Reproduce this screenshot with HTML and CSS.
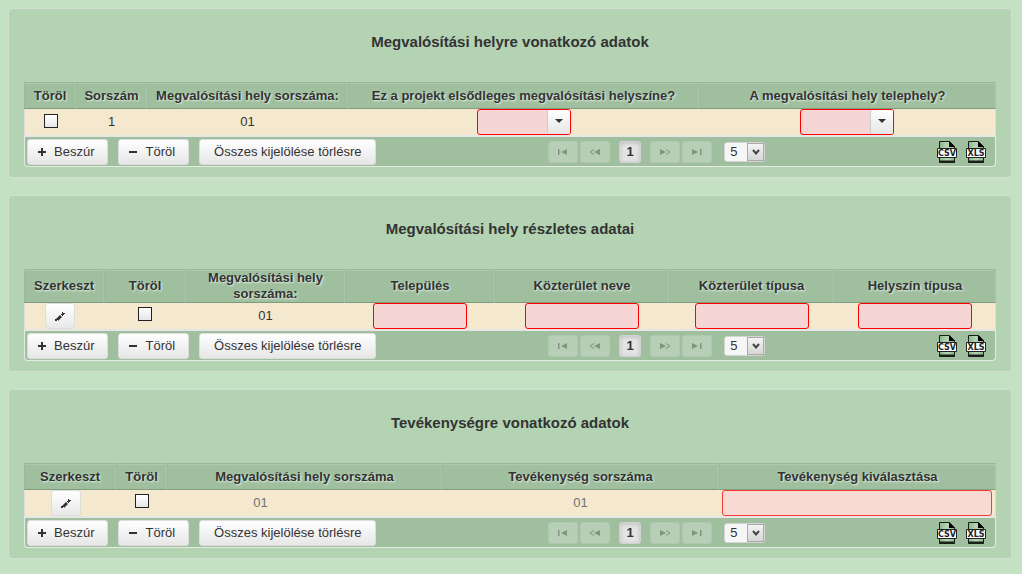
FILE: index.html
```html
<!DOCTYPE html>
<html lang="hu">
<head>
<meta charset="utf-8">
<title>Megvalósítási helyszín</title>
<link rel="stylesheet" href="styles.css">
</head>
<body>
<svg class="sprite" aria-hidden="true">
  <symbol id="plus" viewBox="0 0 8 8"><path d="M3 0h2v3h3v2H5v3H3V5H0V3h3z"/></symbol>
  <symbol id="minus" viewBox="0 0 8 8"><path d="M0 3h8v2H0z"/></symbol>
  <symbol id="caret" viewBox="0 0 8 4"><path d="M0 0h8L4 4z"/></symbol>
  <symbol id="pencil" viewBox="0 0 10 10"><path d="M0 10V8h2v2zM1 8l4-4 2 2-4 4V9H2V8zM6 3h1V1h1v1h2v1H9v1H8v1H7V4H6z"/></symbol>
  <symbol id="first" viewBox="0 0 10 6"><path d="M0 0h1.500v6H0zM9 0v6L3 3z"/></symbol>
  <symbol id="prev" viewBox="0 0 12 6"><path d="M11 0v6L5 3z"/><path d="M5 .5L1 3l4 2.500" fill="none" stroke="currentColor"/></symbol>
  <symbol id="next" viewBox="0 0 12 6"><path d="M1 0v6l6-3z"/><path d="M7 .5L11 3 7 5.500" fill="none" stroke="currentColor"/></symbol>
  <symbol id="last" viewBox="0 0 10 6"><path d="M8 0h1.500v6H8zM0 0v6l6-3z"/></symbol>
  <symbol id="chevron" viewBox="0 0 8 6"><path d="M1 1l3 3.500L7 1" fill="none" stroke="currentColor" stroke-width="2"/></symbol>
  <symbol id="sheet" viewBox="0 0 20 22">
    <path d="M2.500.5h10l5 5v16h-15z" fill="url(#paper)" stroke="#182018"/>
    <path d="M12 0l6 6h-6z" fill="#000"/>
    <path d="M2 20.500h16" stroke="#182018" stroke-width="2"/>
    <path d="M.5 7.500h19v9H.5z" fill="#fff" stroke="#222"/>
  </symbol>
  <linearGradient id="paper"><stop offset="0" stop-color="#8fb490"/><stop offset=".5" stop-color="#b5d6b4"/><stop offset="1" stop-color="#8fb490"/></linearGradient>
</svg>
<main class="page">

<section class="panel">
  <h2 class="title">Megvalósítási helyre vonatkozó adatok</h2>
  <table class="grid">
    <colgroup><col class="w52"><col class="w71"><col class="w201"><col class="w351"><col class="w297"></colgroup>
    <thead><tr><th>Töröl</th><th>Sorszám</th><th>Megvalósítási hely sorszáma:</th><th>Ez a projekt elsődleges megvalósítási helyszíne?</th><th>A megvalósítási hely telephely?</th></tr></thead>
    <tbody><tr>
      <td><input class="tick" type="checkbox" aria-label="Töröl"></td>
      <td>1</td><td>01</td>
      <td><span class="combo"><select class="combo-field" aria-label="Ez a projekt elsődleges megvalósítási helyszíne?"><option></option></select><span class="combo-arrow"><svg width="8" height="4"><use href="#caret"/></svg></span></span></td>
      <td><span class="combo"><select class="combo-field" aria-label="A megvalósítási hely telephely?"><option></option></select><span class="combo-arrow"><svg width="8" height="4"><use href="#caret"/></svg></span></span></td>
    </tr></tbody>
  </table>
  <div class="toolbar">
    <div class="actions">
      <button class="btn with-icon" type="button"><svg width="8" height="8"><use href="#plus"/></svg>Beszúr</button>
      <button class="btn with-icon" type="button"><svg width="8" height="8"><use href="#minus"/></svg>Töröl</button>
      <button class="btn" type="button">Összes kijelölése törlésre</button>
    </div>
    <nav class="pager" aria-label="Lapozó">
      <button class="step" type="button" disabled aria-label="Első"><svg width="10" height="6"><use href="#first"/></svg></button>
      <button class="step" type="button" disabled aria-label="Előző"><svg width="12" height="6"><use href="#prev"/></svg></button>
      <button class="current" type="button">1</button>
      <button class="step" type="button" disabled aria-label="Következő"><svg width="12" height="6"><use href="#next"/></svg></button>
      <button class="step" type="button" disabled aria-label="Utolsó"><svg width="10" height="6"><use href="#last"/></svg></button>
      <span class="rows"><select class="rows-field" aria-label="Sorok száma"><option>5</option></select><span class="rows-arrow"><svg width="8" height="6"><use href="#chevron"/></svg></span></span>
    </nav>
    <div class="exports">
      <a class="export" href="#csv"><svg width="20" height="22"><use href="#sheet"/><text x="10" y="15" class="ext">CSV</text></svg></a>
      <a class="export" href="#xls"><svg width="20" height="22"><use href="#sheet"/><text x="10" y="15" class="ext">XLS</text></svg></a>
    </div>
  </div>
</section>

<section class="panel">
  <h2 class="title">Megvalósítási hely részletes adatai</h2>
  <table class="grid">
    <colgroup><col class="w80"><col class="w82"><col class="w159"><col class="w150"><col class="w174"><col class="w165"><col class="w162"></colgroup>
    <thead><tr><th>Szerkeszt</th><th>Töröl</th><th>Megvalósítási hely sorszáma:</th><th>Település</th><th>Közterület neve</th><th>Közterület típusa</th><th>Helyszín típusa</th></tr></thead>
    <tbody><tr>
      <td class="edit-cell"><button class="edit" type="button" aria-label="Szerkeszt"><svg width="10" height="10"><use href="#pencil"/></svg></button></td>
      <td><input class="tick raised" type="checkbox" aria-label="Töröl"></td>
      <td>01</td>
      <td><input class="field short" type="text" aria-label="Település"></td>
      <td><input class="field" type="text" aria-label="Közterület neve"></td>
      <td><input class="field" type="text" aria-label="Közterület típusa"></td>
      <td><input class="field" type="text" aria-label="Helyszín típusa"></td>
    </tr></tbody>
  </table>
  <div class="toolbar">
    <div class="actions">
      <button class="btn with-icon" type="button"><svg width="8" height="8"><use href="#plus"/></svg>Beszúr</button>
      <button class="btn with-icon" type="button"><svg width="8" height="8"><use href="#minus"/></svg>Töröl</button>
      <button class="btn" type="button">Összes kijelölése törlésre</button>
    </div>
    <nav class="pager" aria-label="Lapozó">
      <button class="step" type="button" disabled aria-label="Első"><svg width="10" height="6"><use href="#first"/></svg></button>
      <button class="step" type="button" disabled aria-label="Előző"><svg width="12" height="6"><use href="#prev"/></svg></button>
      <button class="current" type="button">1</button>
      <button class="step" type="button" disabled aria-label="Következő"><svg width="12" height="6"><use href="#next"/></svg></button>
      <button class="step" type="button" disabled aria-label="Utolsó"><svg width="10" height="6"><use href="#last"/></svg></button>
      <span class="rows"><select class="rows-field" aria-label="Sorok száma"><option>5</option></select><span class="rows-arrow"><svg width="8" height="6"><use href="#chevron"/></svg></span></span>
    </nav>
    <div class="exports">
      <a class="export" href="#csv"><svg width="20" height="22"><use href="#sheet"/><text x="10" y="15" class="ext">CSV</text></svg></a>
      <a class="export" href="#xls"><svg width="20" height="22"><use href="#sheet"/><text x="10" y="15" class="ext">XLS</text></svg></a>
    </div>
  </div>
</section>

<section class="panel">
  <h2 class="title">Tevékenységre vonatkozó adatok</h2>
  <table class="grid">
    <colgroup><col class="w92"><col class="w51"><col class="w275"><col class="w277"><col class="w277"></colgroup>
    <thead><tr><th>Szerkeszt</th><th>Töröl</th><th>Megvalósítási hely sorszáma</th><th>Tevékenység sorszáma</th><th>Tevékenység kiválasztása</th></tr></thead>
    <tbody><tr>
      <td class="edit-cell"><button class="edit" type="button" aria-label="Szerkeszt"><svg width="10" height="10"><use href="#pencil"/></svg></button></td>
      <td><input class="tick raised" type="checkbox" aria-label="Töröl"></td>
      <td class="muted place">01</td>
      <td class="muted">01</td>
      <td class="wide-cell"><input class="field wide" type="text" aria-label="Tevékenység kiválasztása"></td>
    </tr></tbody>
  </table>
  <div class="toolbar">
    <div class="actions">
      <button class="btn with-icon" type="button"><svg width="8" height="8"><use href="#plus"/></svg>Beszúr</button>
      <button class="btn with-icon" type="button"><svg width="8" height="8"><use href="#minus"/></svg>Töröl</button>
      <button class="btn" type="button">Összes kijelölése törlésre</button>
    </div>
    <nav class="pager" aria-label="Lapozó">
      <button class="step" type="button" disabled aria-label="Első"><svg width="10" height="6"><use href="#first"/></svg></button>
      <button class="step" type="button" disabled aria-label="Előző"><svg width="12" height="6"><use href="#prev"/></svg></button>
      <button class="current" type="button">1</button>
      <button class="step" type="button" disabled aria-label="Következő"><svg width="12" height="6"><use href="#next"/></svg></button>
      <button class="step" type="button" disabled aria-label="Utolsó"><svg width="10" height="6"><use href="#last"/></svg></button>
      <span class="rows"><select class="rows-field" aria-label="Sorok száma"><option>5</option></select><span class="rows-arrow"><svg width="8" height="6"><use href="#chevron"/></svg></span></span>
    </nav>
    <div class="exports">
      <a class="export" href="#csv"><svg width="20" height="22"><use href="#sheet"/><text x="10" y="15" class="ext">CSV</text></svg></a>
      <a class="export" href="#xls"><svg width="20" height="22"><use href="#sheet"/><text x="10" y="15" class="ext">XLS</text></svg></a>
    </div>
  </div>
</section>

</main>
</body>
</html>
```
FILE: styles.css
```css
* { box-sizing: border-box; }
body {
  margin: 0;
  background: #c4e2c3;
  color: #333;
  font: 13px/16px "Liberation Sans", Arial, sans-serif;
}
button, input, select { font: inherit; color: inherit; margin: 0; }
svg { display: block; fill: currentColor; }
.sprite { position: absolute; width: 0; height: 0; }

.page {
  display: flex;
  flex-direction: column;
  gap: 17px;
  padding: 8px 10px 15px 8px;
}
.panel {
  padding: 23px 15px 10px;
  background: #b4d3b3;
  border: 1px solid #d3dfd3;
  border-radius: 4px;
}
.title {
  margin: 0 0 30px;
  font-size: 15px;
  line-height: 20px;
  text-align: center;
}

/* data table */
.grid {
  width: 100%;
  table-layout: fixed;
  border-collapse: separate;
  border-spacing: 0;
}
.w51 { width: 51px; } .w52 { width: 52px; } .w71 { width: 71px; }
.w80 { width: 80px; } .w82 { width: 82px; } .w92 { width: 92px; }
.w150 { width: 150px; } .w159 { width: 159px; } .w162 { width: 162px; }
.w165 { width: 165px; } .w174 { width: 174px; } .w201 { width: 201px; }
.w275 { width: 275px; } .w277 { width: 277px; } .w297 { width: 297px; }
.w351 { width: 351px; }
.grid th {
  height: 27px;
  padding: 0 4px;
  background: #a0bf9f;
  border: 1px solid #a9c7a8;
  border-top-color: #9ab999;
  border-bottom-color: #7f9c7f;
  border-left-color: #9cba9b;
  box-shadow: inset 0 1px #aecaad;
  text-shadow: 1px 1px 2px #e4f0e3;
}
.grid td {
  height: 26px;
  padding: 0;
  background: #f4e9ce;
  text-align: center;
  vertical-align: middle;
}
.grid td:first-child { border-left: 1px solid #dcdcdc; }
.grid td:last-child { border-right: 1px solid #dcdcdc; }
.grid .muted { color: #77706c; }
.grid .place { padding-right: 88px; }
.grid .edit-cell { padding-right: 10px; }
.grid .wide-cell { padding: 0 3px; }

.tick {
  appearance: none;
  display: block;
  width: 14px;
  height: 14px;
  margin: 0 auto 2px;
  border: 1px solid #222;
  background: linear-gradient(#fff, #e6e6e6);
}
.raised { margin-bottom: 4px; }

.field, .combo-field {
  display: block;
  width: 114px;
  height: 26px;
  margin: 0 auto;
  padding: 0 4px;
  border: 1px solid #f00;
  border-radius: 3px;
  background: #f6d6d5;
}
.short { width: 94px; }
.wide { width: 100%; background: #f6dad3; border-color: #fb3c36; }
.combo { position: relative; display: block; width: 94px; margin: 0 auto; }
.combo-field { width: 100%; appearance: none; }
.combo-arrow {
  position: absolute;
  top: 1px;
  right: 1px;
  bottom: 1px;
  display: grid;
  place-items: center;
  width: 23px;
  padding-bottom: 2px;
  border-left: 1px solid #ccc;
  border-radius: 2px;
  background: linear-gradient(#fff, #e6e6e6);
  pointer-events: none;
}
.edit {
  display: grid;
  place-items: center;
  width: 30px;
  height: 26px;
  margin: 0 auto;
  padding: 0;
  border: 1px solid #ddd;
  border-radius: 3px;
  background: linear-gradient(#fff, #e8e8e8);
}

/* table footer */
.toolbar {
  display: flex;
  align-items: center;
  justify-content: space-between;
  min-height: 32px;
  padding: 2px 9px 1px 2px;
  background: #a0bf9f;
  border: 1px solid #e4ebe3;
  border-top: 2px solid #e6e6e6;
  border-radius: 0 0 4px 4px;
}
.actions { display: flex; gap: 10px; }
.btn {
  display: flex;
  align-items: center;
  gap: 8px;
  height: 26px;
  padding: 0 14px;
  border: 1px solid #ddd;
  border-radius: 3px;
  background: linear-gradient(#fff, #e6e6e6);
  white-space: nowrap;
}
.with-icon { padding: 0 13px 0 10px; }
.pager { display: flex; align-items: center; gap: 2px; }
.step {
  display: grid;
  place-items: center;
  width: 30px;
  height: 22px;
  padding: 0;
  border: 1px solid #afc9ae;
  border-radius: 3px;
  background: #b8cfb7;
  color: #7d967d;
}
.current {
  width: 22px;
  height: 22px;
  margin: 0 7px;
  padding: 0;
  border: 1px solid #d2d2d4;
  border-radius: 3px;
  background: #e4e4e4;
  box-shadow: inset 0 1px 4px #bbb;
  font-weight: bold;
}
.rows { position: relative; margin-left: 10px; }
.rows-field {
  appearance: none;
  display: block;
  width: 41px;
  height: 20px;
  padding: 0 5px;
  border: 1px solid #d4d4d4;
  border-radius: 3px;
  background: #f6f6f6;
}
.rows-arrow {
  position: absolute;
  top: 1px;
  right: 1px;
  bottom: 1px;
  display: grid;
  place-items: center;
  width: 17px;
  border: 1px solid #aaa;
  background: linear-gradient(#f4f4f4, #d6d6d6);
  color: #444;
  pointer-events: none;
}
.exports { display: flex; gap: 9px; }
.export { color: #222; }
.ext {
  font: bold 8px "DejaVu Sans", sans-serif;
  text-anchor: middle;
}
```
